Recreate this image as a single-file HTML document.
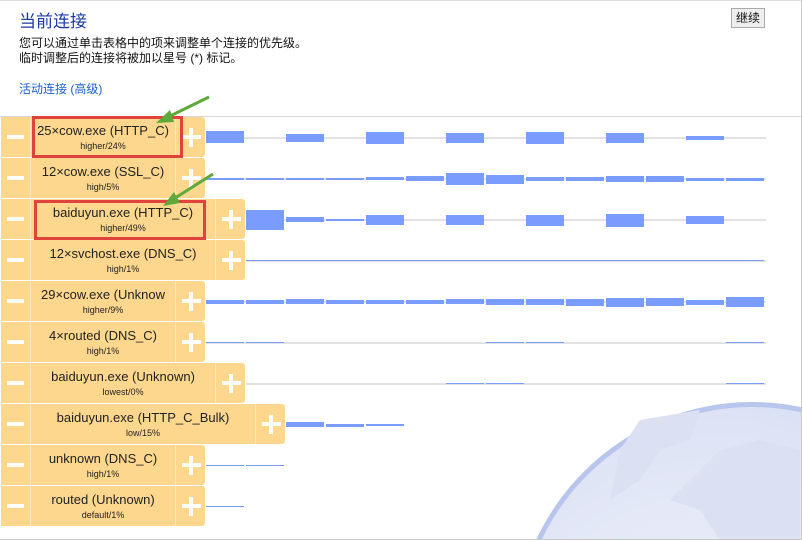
<!DOCTYPE html>
<html><head><meta charset="utf-8"><style>
*{margin:0;padding:0;box-sizing:border-box}
html,body{width:802px;height:540px;overflow:hidden}
body{position:relative;background:#fff;font-family:"Liberation Sans","Noto Sans CJK SC",sans-serif}
.a{position:absolute}
.frame{position:absolute;left:0;top:0;width:802px;height:540px;border-right:1px solid #c8c8c8;border-bottom:1px solid #c8c8c8;border-top:1px solid #ddd}
.row{position:absolute;left:1px;height:40px;background:#fdd78d;border-radius:0 3px 3px 0}
.mi{position:absolute;left:0;top:0;width:30px;height:40px;border-right:1px solid #fbe8c0}
.mi:after{content:"";position:absolute;left:6px;top:18px;width:17px;height:4px;background:#fff}
.pl{position:absolute;right:0;top:0;width:30px;height:40px;border-left:1px solid #fbe8c0}
.pl:before{content:"";position:absolute;left:6px;top:18px;width:19px;height:4px;background:#fff}
.pl:after{content:"";position:absolute;left:13px;top:11px;width:4px;height:19px;background:#fff}
.tx{position:absolute;left:30px;right:30px;top:6px;text-align:center;color:#222;font-size:13px;line-height:16px}
.tx small{display:block;font-size:9px;line-height:14px}
.gl{position:absolute;height:2px;background:#e2e2e2}
.b{position:absolute;background:#7b9cff;width:38px}
</style></head><body>
<svg class="a" style="left:0;top:0" width="802" height="540">
<defs><radialGradient id="g" cx="0.4" cy="0.6" r="0.7"><stop offset="0" stop-color="#f2f4fb"/><stop offset="1" stop-color="#d9dff4"/></radialGradient></defs>
<circle cx="752" cy="640" r="238" fill="#b8c6ee"/>
<circle cx="752" cy="640" r="233" fill="url(#g)"/>
<path d="M640 420 L700 410 L690 440 L660 450 L640 480 L610 500 L620 450Z M670 500 L700 470 L720 450 L760 440 L800 450 L800 540 L720 540 L700 510Z" fill="#dbe0f3"/>
</svg>
<div class="a" style="left:19px;top:7px;font-size:17px;color:#1c3aa8">当前连接</div>
<div class="a" style="left:19px;top:36px;font-size:12px;line-height:15px;color:#111">您可以通过单击表格中的项来调整单个连接的优先级。<br>临时调整后的连接将被加以星号 (*) 标记。</div>
<div class="a" style="left:19px;top:80px;font-size:12px;color:#1e5fd0">活动连接 (高级)</div>
<div class="a" style="left:731px;top:8px;width:34px;height:20px;border:1px solid #aaa;background:#eee;font-size:12px;line-height:18px;text-align:center;color:#111">继续</div>
<div class="a" style="left:0;top:116px;width:802px;height:1px;background:#d6d6d6"></div>

<div class="gl" style="left:206px;top:137px;width:560px"></div>
<div class="gl" style="left:206px;top:178px;width:560px"></div>
<div class="gl" style="left:246px;top:219px;width:520px"></div>
<div class="gl" style="left:246px;top:260px;width:520px"></div>
<div class="gl" style="left:206px;top:301px;width:560px"></div>
<div class="gl" style="left:206px;top:342px;width:560px"></div>
<div class="gl" style="left:246px;top:383px;width:520px"></div>

<div class="b" style="left:206px;top:131px;height:12px"></div>
<div class="b" style="left:286px;top:134px;height:8px"></div>
<div class="b" style="left:366px;top:132px;height:12px"></div>
<div class="b" style="left:446px;top:133px;height:10px"></div>
<div class="b" style="left:526px;top:132px;height:12px"></div>
<div class="b" style="left:606px;top:133px;height:10px"></div>
<div class="b" style="left:686px;top:136px;height:4px"></div>
<div class="b" style="left:206px;top:178px;height:2px"></div>
<div class="b" style="left:246px;top:178px;height:2px"></div>
<div class="b" style="left:286px;top:178px;height:2px"></div>
<div class="b" style="left:326px;top:178px;height:2px"></div>
<div class="b" style="left:366px;top:177px;height:3px"></div>
<div class="b" style="left:406px;top:176px;height:5px"></div>
<div class="b" style="left:446px;top:173px;height:12px"></div>
<div class="b" style="left:486px;top:175px;height:9px"></div>
<div class="b" style="left:526px;top:177px;height:4px"></div>
<div class="b" style="left:566px;top:177px;height:4px"></div>
<div class="b" style="left:606px;top:176px;height:6px"></div>
<div class="b" style="left:646px;top:176px;height:6px"></div>
<div class="b" style="left:686px;top:178px;height:3px"></div>
<div class="b" style="left:726px;top:178px;height:3px"></div>
<div class="b" style="left:246px;top:210px;height:20px"></div>
<div class="b" style="left:286px;top:217px;height:5px"></div>
<div class="b" style="left:326px;top:219px;height:2px"></div>
<div class="b" style="left:366px;top:215px;height:10px"></div>
<div class="b" style="left:446px;top:215px;height:10px"></div>
<div class="b" style="left:526px;top:215px;height:11px"></div>
<div class="b" style="left:606px;top:214px;height:13px"></div>
<div class="b" style="left:686px;top:216px;height:8px"></div>
<div class="b" style="left:246px;top:260px;height:1px;width:518px"></div>
<div class="b" style="left:206px;top:300px;height:4px"></div>
<div class="b" style="left:246px;top:300px;height:4px"></div>
<div class="b" style="left:286px;top:299px;height:5px"></div>
<div class="b" style="left:326px;top:300px;height:4px"></div>
<div class="b" style="left:366px;top:300px;height:4px"></div>
<div class="b" style="left:406px;top:300px;height:4px"></div>
<div class="b" style="left:446px;top:299px;height:5px"></div>
<div class="b" style="left:486px;top:299px;height:6px"></div>
<div class="b" style="left:526px;top:299px;height:6px"></div>
<div class="b" style="left:566px;top:299px;height:7px"></div>
<div class="b" style="left:606px;top:298px;height:9px"></div>
<div class="b" style="left:646px;top:298px;height:8px"></div>
<div class="b" style="left:686px;top:300px;height:5px"></div>
<div class="b" style="left:726px;top:297px;height:10px"></div>
<div class="b" style="left:206px;top:342px;height:1px"></div>
<div class="b" style="left:246px;top:342px;height:1px"></div>
<div class="b" style="left:486px;top:342px;height:1px"></div>
<div class="b" style="left:526px;top:342px;height:1px"></div>
<div class="b" style="left:726px;top:342px;height:1px"></div>
<div class="b" style="left:446px;top:383px;height:1px"></div>
<div class="b" style="left:486px;top:383px;height:1px"></div>
<div class="b" style="left:726px;top:383px;height:1px"></div>
<div class="b" style="left:286px;top:422px;height:5px"></div>
<div class="b" style="left:326px;top:424px;height:3px"></div>
<div class="b" style="left:366px;top:424px;height:2px"></div>
<div class="b" style="left:206px;top:465px;height:1px"></div>
<div class="b" style="left:246px;top:465px;height:1px"></div>
<div class="b" style="left:206px;top:506px;height:1px"></div>

<div class="row" style="top:117px;width:204px"><div class="mi"></div><div class="tx">25×cow.exe (HTTP_C)<small>higher/24%</small></div><div class="pl"></div></div>
<div class="row" style="top:158px;width:204px"><div class="mi"></div><div class="tx">12×cow.exe (SSL_C)<small>high/5%</small></div><div class="pl"></div></div>
<div class="row" style="top:199px;width:244px"><div class="mi"></div><div class="tx">baiduyun.exe (HTTP_C)<small>higher/49%</small></div><div class="pl"></div></div>
<div class="row" style="top:240px;width:244px"><div class="mi"></div><div class="tx">12×svchost.exe (DNS_C)<small>high/1%</small></div><div class="pl"></div></div>
<div class="row" style="top:281px;width:204px"><div class="mi"></div><div class="tx" style="white-space:nowrap;overflow:hidden">29×cow.exe (Unknow<small>higher/9%</small></div><div class="pl"></div></div>
<div class="row" style="top:322px;width:204px"><div class="mi"></div><div class="tx">4×routed (DNS_C)<small>high/1%</small></div><div class="pl"></div></div>
<div class="row" style="top:363px;width:244px"><div class="mi"></div><div class="tx">baiduyun.exe (Unknown)<small>lowest/0%</small></div><div class="pl"></div></div>
<div class="row" style="top:404px;width:284px"><div class="mi"></div><div class="tx">baiduyun.exe (HTTP_C_Bulk)<small>low/15%</small></div><div class="pl"></div></div>
<div class="row" style="top:445px;width:204px"><div class="mi"></div><div class="tx">unknown (DNS_C)<small>high/1%</small></div><div class="pl"></div></div>
<div class="row" style="top:486px;width:204px"><div class="mi"></div><div class="tx">routed (Unknown)<small>default/1%</small></div><div class="pl"></div></div>

<div class="a" style="left:32px;top:116px;width:151px;height:42px;border:3px solid #e0423c"></div>
<div class="a" style="left:34px;top:200px;width:172px;height:40px;border:3px solid #e0423c"></div>
<svg class="a" style="left:0;top:0" width="802" height="540">
<g stroke="#5fa83a" stroke-width="3" fill="#5fa83a">
<line x1="209" y1="97" x2="166" y2="118"/><polygon points="156,123 170,110 174,122" stroke="none"/>
<line x1="213" y1="174" x2="172" y2="200"/><polygon points="163,206 174,192 180,203" stroke="none"/>
</g></svg>
<div class="frame"></div>
</body></html>
